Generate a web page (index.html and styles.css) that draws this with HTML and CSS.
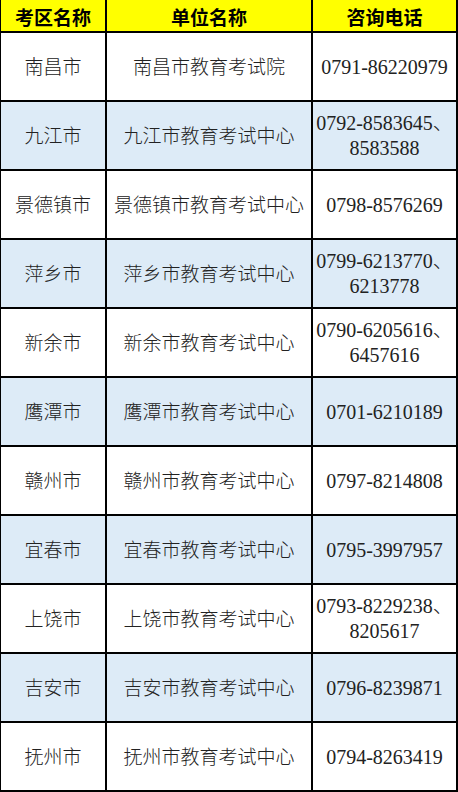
FILE: index.html
```html
<!DOCTYPE html>
<html lang="zh-CN">
<head>
<meta charset="utf-8">
<title>考区名称</title>
<link rel="stylesheet" href="styles.css">
</head>
<body>
<div class="grid">
  <div class="cell head">考区名称</div>
  <div class="cell head">单位名称</div>
  <div class="cell head">咨询电话</div>

  <div class="cell">南昌市</div>
  <div class="cell">南昌市教育考试院</div>
  <div class="cell tel">0791-86220979</div>

  <div class="cell blue">九江市</div>
  <div class="cell blue">九江市教育考试中心</div>
  <div class="cell tel blue">0792-8583645、<br>8583588</div>

  <div class="cell">景德镇市</div>
  <div class="cell">景德镇市教育考试中心</div>
  <div class="cell tel">0798-8576269</div>

  <div class="cell blue">萍乡市</div>
  <div class="cell blue">萍乡市教育考试中心</div>
  <div class="cell tel blue">0799-6213770、<br>6213778</div>

  <div class="cell">新余市</div>
  <div class="cell">新余市教育考试中心</div>
  <div class="cell tel">0790-6205616、<br>6457616</div>

  <div class="cell blue">鹰潭市</div>
  <div class="cell blue">鹰潭市教育考试中心</div>
  <div class="cell tel blue">0701-6210189</div>

  <div class="cell">赣州市</div>
  <div class="cell">赣州市教育考试中心</div>
  <div class="cell tel">0797-8214808</div>

  <div class="cell blue">宜春市</div>
  <div class="cell blue">宜春市教育考试中心</div>
  <div class="cell tel blue">0795-3997957</div>

  <div class="cell">上饶市</div>
  <div class="cell">上饶市教育考试中心</div>
  <div class="cell tel">0793-8229238、<br>8205617</div>

  <div class="cell blue">吉安市</div>
  <div class="cell blue">吉安市教育考试中心</div>
  <div class="cell tel blue">0796-8239871</div>

  <div class="cell">抚州市</div>
  <div class="cell">抚州市教育考试中心</div>
  <div class="cell tel">0794-8263419</div>
</div>
</body>
</html>
```
FILE: styles.css
```css
html, body {
  margin: 0;
  padding: 0;
  background: #ffffff;
}

.grid {
  width: 458px;
  height: 792px;
  box-sizing: border-box;
  display: grid;
  grid-template-columns: 104px 204px 143px;
  grid-template-rows: 31px repeat(11, 67px);
  gap: 2px;
  padding: 0 2px 2px 1px;
  background: #000000;
}

.cell {
  display: flex;
  align-items: center;
  justify-content: center;
  text-align: center;
  background: #ffffff;
  color: #222222;
  font-family: "Liberation Serif", "Noto Sans CJK SC", serif;
  font-weight: 300;
  font-size: 19px;
  line-height: 25px;
  padding-top: 2px;
}

.cell.blue {
  background: #ddebf7;
}

.cell.tel {
  font-size: 20px;
  padding-top: 1px;
}

.cell.head {
  background: #ffff00;
  color: #000000;
  font-family: "Noto Sans CJK SC", sans-serif;
  font-weight: bold;
  font-size: 19px;
  line-height: 31px;
  padding-top: 2px;
}
```
